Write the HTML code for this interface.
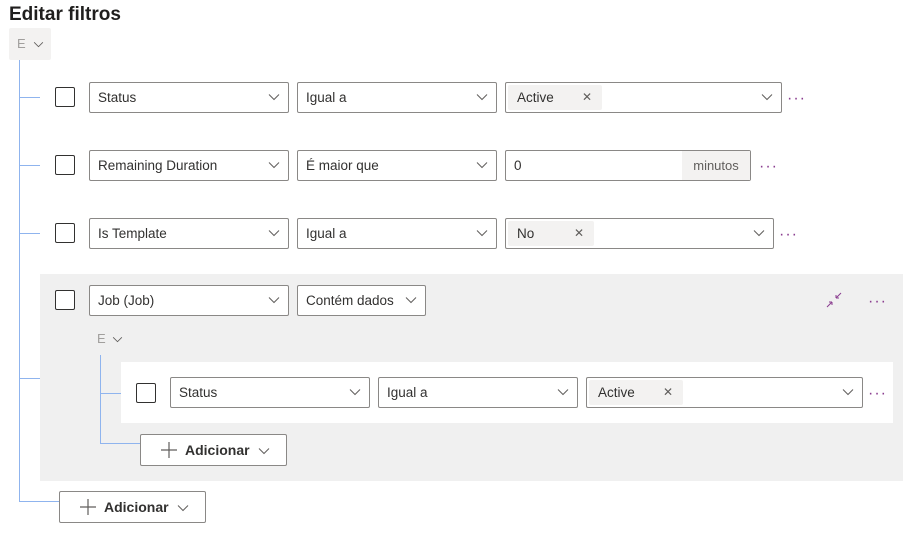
<!DOCTYPE html>
<html><head><meta charset="utf-8"><style>
body{margin:0;width:918px;height:553px;background:#fff;font-family:"Segoe UI","Liberation Sans",sans-serif;color:#323130;position:relative;overflow:hidden}
.a{position:absolute;box-sizing:border-box}
.dd{position:absolute;box-sizing:border-box;border:1px solid #8a8886;border-radius:2px;background:#fff;height:31px;font-size:13.5px;line-height:29px;padding-left:8px}
.dd svg.ch{position:absolute;right:8px;top:10px}
.cb{position:absolute;width:20px;height:20px;border:1px solid #323130;border-radius:2px;box-sizing:border-box;background:#fff}
.dots{position:absolute;font-size:16px;color:#8a3d8f;letter-spacing:1px}
.chip{position:absolute;top:2px;height:25px;background:#f3f2f1;line-height:25px;padding-left:9px;font-size:13.5px;border-radius:2px}
.chip span{position:absolute;right:10px;color:#605e5c;font-size:12px}
.line{position:absolute;background:#8fb4ee}
.btn{position:absolute;box-sizing:border-box;border:1px solid #8a8886;border-radius:2px;background:#fff;height:32px;font-size:14px;font-weight:600;line-height:30px;color:#323130}
</style></head><body>
<svg width="0" height="0" style="position:absolute"><defs><symbol id="chev" viewBox="0 0 12 8"><path d="M1 1.5 L6 6.5 L11 1.5" fill="none" stroke="#605e5c" stroke-width="1"/></symbol></defs></svg>

<div class="a" style="left:9px;top:4px;font-size:19px;font-weight:600;color:#201f1e">Editar filtros</div>
<div class="a" style="left:9px;top:28px;width:42px;height:32px;background:#f3f2f1;border-radius:2px;font-size:13px;color:#a19f9d;line-height:32px;padding-left:8px">E <svg width="11" height="7" style="margin-left:4px"><use href="#chev"/></svg></div>

<div class="line" style="left:19px;top:60px;width:1px;height:442px"></div>
<div class="line" style="left:19px;top:97px;width:21px;height:1px"></div>
<div class="line" style="left:19px;top:165px;width:21px;height:1px"></div>
<div class="line" style="left:19px;top:233px;width:21px;height:1px"></div>
<div class="line" style="left:19px;top:378px;width:21px;height:1px"></div>
<div class="line" style="left:19px;top:501px;width:40px;height:1px"></div>

<!-- row1 -->
<div class="cb" style="left:55px;top:87px"></div>
<div class="dd" style="left:89px;top:82px;width:200px">Status<svg class="ch" width="12" height="8"><use href="#chev"/></svg></div>
<div class="dd" style="left:297px;top:82px;width:200px">Igual a<svg class="ch" width="12" height="8"><use href="#chev"/></svg></div>
<div class="dd" style="left:505px;top:82px;width:277px"><div class="chip" style="left:2px;width:85px">Active<span>✕</span></div><svg class="ch" width="12" height="8"><use href="#chev"/></svg></div>
<div class="dots" style="left:787px;top:90px">···</div>

<!-- row2 -->
<div class="cb" style="left:55px;top:155px"></div>
<div class="dd" style="left:89px;top:150px;width:200px">Remaining Duration<svg class="ch" width="12" height="8"><use href="#chev"/></svg></div>
<div class="dd" style="left:297px;top:150px;width:200px">É maior que<svg class="ch" width="12" height="8"><use href="#chev"/></svg></div>
<div class="dd" style="left:505px;top:150px;width:246px">0<div class="a" style="right:0;top:0;width:68px;height:29px;background:#f3f2f1;text-align:center;color:#605e5c;font-size:13px">minutos</div></div>
<div class="dots" style="left:759px;top:158px">···</div>

<!-- row3 -->
<div class="cb" style="left:55px;top:223px"></div>
<div class="dd" style="left:89px;top:218px;width:200px">Is Template<svg class="ch" width="12" height="8"><use href="#chev"/></svg></div>
<div class="dd" style="left:297px;top:218px;width:200px">Igual a<svg class="ch" width="12" height="8"><use href="#chev"/></svg></div>
<div class="dd" style="left:505px;top:218px;width:269px"><div class="chip" style="left:2px;width:77px">No<span>✕</span></div><svg class="ch" width="12" height="8"><use href="#chev"/></svg></div>
<div class="dots" style="left:779px;top:226px">···</div>

<!-- group -->
<div class="a" style="left:40px;top:274px;width:863px;height:207px;background:#f0f0f0"></div>
<div class="cb" style="left:55px;top:290px"></div>
<div class="dd" style="left:89px;top:285px;width:200px">Job (Job)<svg class="ch" width="12" height="8"><use href="#chev"/></svg></div>
<div class="dd" style="left:297px;top:285px;width:129px">Contém dados<svg class="ch" width="12" height="8"><use href="#chev"/></svg></div>
<svg class="a" style="left:826px;top:292px" width="16" height="16" viewBox="0 0 16 16"><path d="M1 15 L6 10 M6 10 H3 M6 10 V13 M15 1 L10 6 M10 6 H13 M10 6 V3" fill="none" stroke="#8a3d8f" stroke-width="1"/></svg>
<div class="dots" style="left:868px;top:293px">···</div>
<div class="a" style="left:97px;top:331px;font-size:13px;color:#a19f9d">E <svg width="11" height="7" style="margin-left:3px"><use href="#chev"/></svg></div>
<div class="line" style="left:100px;top:355px;width:1px;height:89px"></div>
<div class="line" style="left:100px;top:393px;width:21px;height:1px"></div>
<div class="line" style="left:100px;top:443px;width:40px;height:1px"></div>
<div class="a" style="left:121px;top:362px;width:772px;height:61px;background:#fff"></div>
<div class="cb" style="left:136px;top:383px"></div>
<div class="dd" style="left:170px;top:377px;width:200px">Status<svg class="ch" width="12" height="8"><use href="#chev"/></svg></div>
<div class="dd" style="left:378px;top:377px;width:200px">Igual a<svg class="ch" width="12" height="8"><use href="#chev"/></svg></div>
<div class="dd" style="left:586px;top:377px;width:277px"><div class="chip" style="left:2px;width:85px">Active<span>✕</span></div><svg class="ch" width="12" height="8"><use href="#chev"/></svg></div>
<div class="dots" style="left:868px;top:385px">···</div>

<div class="btn" style="left:140px;top:434px;width:147px;padding-left:20px"><svg width="16" height="16" style="vertical-align:-3px;margin-right:8px" viewBox="0 0 16 16"><path d="M8 0V16M0 8H16" stroke="#605e5c" stroke-width="1.2"/></svg>Adicionar<svg width="12" height="8" style="margin-left:8px"><use href="#chev"/></svg></div>
<div class="btn" style="left:59px;top:491px;width:147px;padding-left:20px"><svg width="16" height="16" style="vertical-align:-3px;margin-right:8px" viewBox="0 0 16 16"><path d="M8 0V16M0 8H16" stroke="#605e5c" stroke-width="1.2"/></svg>Adicionar<svg width="12" height="8" style="margin-left:8px"><use href="#chev"/></svg></div>
</body></html>
